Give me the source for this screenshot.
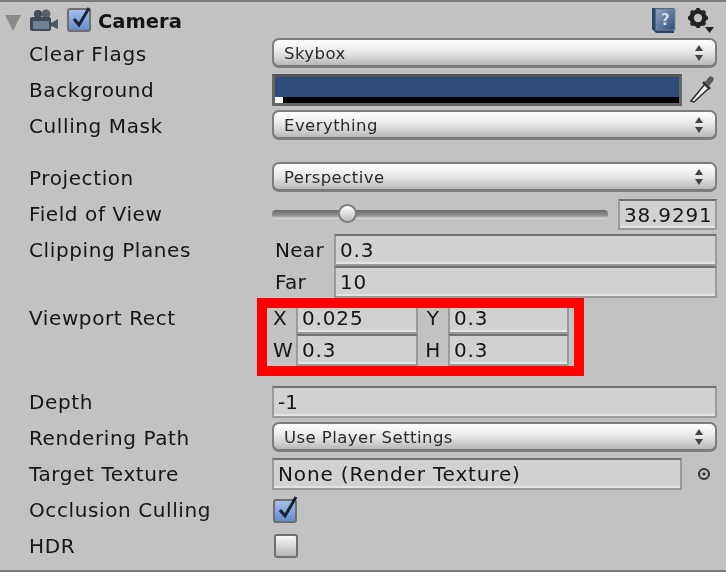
<template>
  <div class="panel">
    <header class="head">
      <svg class="fold" width="18" height="18" viewBox="0 0 18 18"><path d="M1 1H17L9 17Z" fill="#8b8b8b"/></svg>
      <svg class="cam" width="30" height="24" viewBox="0 0 30 24">
        <circle cx="9" cy="5" r="4" fill="#3f4c59"/><circle cx="17" cy="5" r="4.500" fill="#56626e"/>
        <rect x="1" y="8" width="21" height="14" rx="2" fill="#3d4a57"/>
        <rect x="4" y="12" width="16" height="8" fill="#6d8295"/>
        <path d="M22 14L29 10V20L22 17Z" fill="#4c5864"/>
      </svg>
      <svg class="chk" width="26" height="26" viewBox="0 0 26 26">
        <defs><linearGradient id="bl" x1="0" y1="0" x2="0" y2="1"><stop offset="0" stop-color="#a9c2e6"/><stop offset="1" stop-color="#5f8ad0"/></linearGradient></defs>
        <rect x="1" y="3" width="22" height="22" rx="2" fill="url(#bl)" stroke="#707070" stroke-width="2"/>
        <path d="M7 13L12 19L22 2" fill="none" stroke="#1b2230" stroke-width="3"/>
      </svg>
      <span class="title">Camera</span>
      <svg class="book" width="28" height="28" viewBox="0 0 28 28">
        <defs><linearGradient id="bk" x1="0" y1="0" x2="1" y2="1"><stop offset="0" stop-color="#8fa6c6"/><stop offset="1" stop-color="#2d4b78"/></linearGradient></defs>
        <path d="M2 2H24V27H6L2 23Z" fill="#2c4468"/>
        <rect x="6" y="3" width="19" height="21" fill="url(#bk)" stroke="#7f8a99"/>
        <text x="11" y="19" class="q">?</text>
      </svg>
      <svg class="gear" width="28" height="26" viewBox="0 0 28 26">
        <circle cx="11" cy="10" r="6.500" fill="none" stroke="#222" stroke-width="4.500"/>
        <path d="M11 0V20M1 10H21M4 3L18 17M18 3L4 17" stroke="#222" stroke-width="3.400"/>
        <circle cx="11" cy="10" r="4.200" fill="#c2c2c2"/>
        <path d="M18 19H27L22.500 25Z" fill="#222"/>
      </svg>
    </header>

    <div class="row"><span class="label">Clear Flags</span><div class="drop"><span>Skybox</span><i class="arrows"></i></div></div>
    <div class="row">
      <span class="label">Background</span>
      <div class="swatch"><div class="alpha"><b></b></div></div>
      <svg class="dropper" width="28" height="30" viewBox="0 0 28 30">
        <path d="M3 27L17 10L21 14L6 28Z" fill="#f4f4f4" stroke="#2a2a2a" stroke-width="1.500"/>
        <path d="M17 8L21 3C23 1 27 4 25 7L21 12Z" fill="#5a5a5a"/>
        <path d="M15 8L22 15" stroke="#333" stroke-width="2.500"/>
      </svg>
    </div>
    <div class="row"><span class="label">Culling Mask</span><div class="drop"><span>Everything</span><i class="arrows"></i></div></div>

    <div class="row gap"><span class="label">Projection</span><div class="drop"><span>Perspective</span><i class="arrows"></i></div></div>
    <div class="row">
      <span class="label">Field of View</span>
      <div class="slider"><div class="track"></div><div class="thumb"></div></div>
      <div class="field num">38.9291</div>
    </div>
    <div class="row planes">
      <span class="label">Clipping Planes</span>
      <div class="stack">
        <div class="pair"><span class="sub">Near</span><div class="field grow">0.3</div></div>
        <div class="pair"><span class="sub">Far</span><div class="field grow">10</div></div>
      </div>
    </div>
    <div class="row rect">
      <span class="label">Viewport Rect</span>
      <div class="vp">
        <span class="sub">X</span><div class="field">0.025</div><span class="sub mid">Y</span><div class="field">0.3</div>
        <span class="sub">W</span><div class="field">0.3</div><span class="sub mid">H</span><div class="field">0.3</div>
        <div class="mark"></div>
      </div>
    </div>

    <div class="row depth"><span class="label">Depth</span><div class="field grow small">-1</div></div>
    <div class="row"><span class="label">Rendering Path</span><div class="drop"><span>Use Player Settings</span><i class="arrows"></i></div></div>
    <div class="row">
      <span class="label">Target Texture</span>
      <div class="field target">None (Render Texture)</div>
      <span class="dot"></span>
    </div>
    <div class="row">
      <span class="label">Occlusion Culling</span>
      <svg class="box" width="26" height="28" viewBox="0 0 26 28">
        <rect x="2" y="5" width="22" height="22" rx="2" fill="url(#bl)" stroke="#707070" stroke-width="2"/>
        <path d="M8 15L13 21L24 2" fill="none" stroke="#1b2230" stroke-width="3"/>
      </svg>
    </div>
    <div class="row">
      <span class="label">HDR</span>
      <div class="empty"></div>
    </div>
  </div>
</template>

<style>
html, body { margin: 0; background: #c2c2c2; }
</style>

<style scoped>
.panel {
  width: 726px;
  height: 572px;
  box-sizing: border-box;
  border-top: 2px solid #7a7a7a;
  border-bottom: 2px solid #7a7a7a;
  background: #c2c2c2;
  color: #161616;
  font-family: "DejaVu Sans", sans-serif;
  font-size: 20px;
  overflow: hidden;
}
.head { height: 34px; display: flex; align-items: center; padding: 0 11px 0 4px; }
.head svg, .label, .title, .sub, .drop, .field, .dropper, .box, .empty, .swatch, .slider, .dot { filter: blur(0.45px); }
.fold { margin: 7px 7px 0 0; }
.cam { margin: 4px 9px 0 0; }
.chk { margin: -1px 6px 0 -1px; }
.title { font-weight: 700; font-size: 19.500px; color: #141414; margin: 4px 0 0 -1px; }
.book { margin: 2px 9px 0 auto; }
.gear { margin: 3px 0 0 0; }
.q { font-family: "DejaVu Sans", sans-serif; font-size: 15px; font-weight: 700; fill: #cfd9e8; }
.row { height: 36px; display: flex; align-items: center; padding: 0 9px 0 29px; }
.gap { margin-top: 16px; }
.label { width: 243px; flex: none; letter-spacing: 0.6px; }
.drop {
  flex: 1;
  height: 30px;
  margin-bottom: 2px;
  box-sizing: border-box;
  display: flex;
  align-items: center;
  justify-content: space-between;
  padding: 0 11px 0 10px;
  border: 2px solid #7d7d7d;
  border-bottom-width: 3px;
  border-radius: 7px;
  background: linear-gradient(#fbfbfb 10%, #e6e6e6 50%, #b9b9b9);
  font-size: 16.500px;
  letter-spacing: 0.45px;
  color: #2a2a2a;
}
.drop span { padding-top: 2px; }
.arrows { position: relative; width: 8px; height: 16px; flex: none; margin-right: 1px; }
.arrows::before, .arrows::after { content: ""; position: absolute; left: 0; border-left: 4px solid transparent; border-right: 4px solid transparent; }
.arrows::before { top: 0; border-bottom: 6px solid #444; }
.arrows::after { bottom: 0; border-top: 6px solid #444; }
.swatch {
  width: 410px;
  height: 32px;
  box-sizing: border-box;
  border: 3px solid #666;
  background: #2e4b7a;
  border-top-color: #555;
  display: flex;
  align-items: flex-end;
}
.alpha { width: 100%; height: 6px; background: #000; }
.alpha b { display: block; width: 8px; height: 6px; background: #fff; }
.dropper { margin: 0 0 2px 6px; }
.slider { position: relative; width: 336px; height: 24px; margin-right: 10px; flex: none; }
.track { position: absolute; left: 0; right: 0; top: 8px; height: 9px; border-radius: 4px; background: linear-gradient(#6b6b6b, #8f8f8f 60%, #e0e0e0); }
.thumb { position: absolute; left: 66px; top: 2px; width: 19px; height: 19px; box-sizing: border-box; border-radius: 50%; border: 2px solid #7f7f7f; background: linear-gradient(#fff, #bdbdbd); }
.field {
  box-sizing: border-box;
  height: 32px;
  line-height: 28px;
  padding-left: 4px;
  border: 2px solid #9a9a9a;
  border-top: 2px solid #717171;
  box-shadow: inset 0 -2px 0 #e4e4e4;
  background: #d1d1d1;
  letter-spacing: 0.85px;
  overflow: hidden;
}
.num { width: 99px; flex: none; height: 31px; }
.grow { flex: 1; }
.small { letter-spacing: 0; }
.planes { height: 64px; margin-top: 2px; align-items: flex-start; }
.planes .label { line-height: 32px; }
.stack { flex: 1; }
.pair { display: flex; height: 32px; align-items: center; }
.sub { letter-spacing: 0.3px; }
.pair .sub { width: 62px; padding-left: 3px; box-sizing: border-box; flex: none; }
.rect { height: 64px; margin-top: 4px; align-items: flex-start; }
.rect .label { line-height: 32px; }
.vp {
  position: relative;
  display: grid;
  grid-template-columns: 23px 122px 30px 121px;
  grid-auto-rows: 32px;
  align-items: center;
  margin-left: 1px;
}
.mid { text-align: center; }
.mark {
  position: absolute;
  left: -16px;
  top: -4px;
  width: 327px;
  height: 78px;
  box-sizing: border-box;
  border: 10px solid #f00;
}
.depth { margin-top: 18px; }
.target { width: 410px; flex: none; }
.dot { width: 12px; height: 12px; box-sizing: border-box; border: 2px solid #333; border-radius: 50%; margin-left: 16px; background: radial-gradient(#333 25%, transparent 30%); }
.box { margin: -2px 0 0 0; }
.empty { width: 24px; height: 24px; margin-left: 2px; box-sizing: border-box; border: 2px solid #707070; border-radius: 3px; background: linear-gradient(#f8f8f8, #b5b5b5); }
</style>
